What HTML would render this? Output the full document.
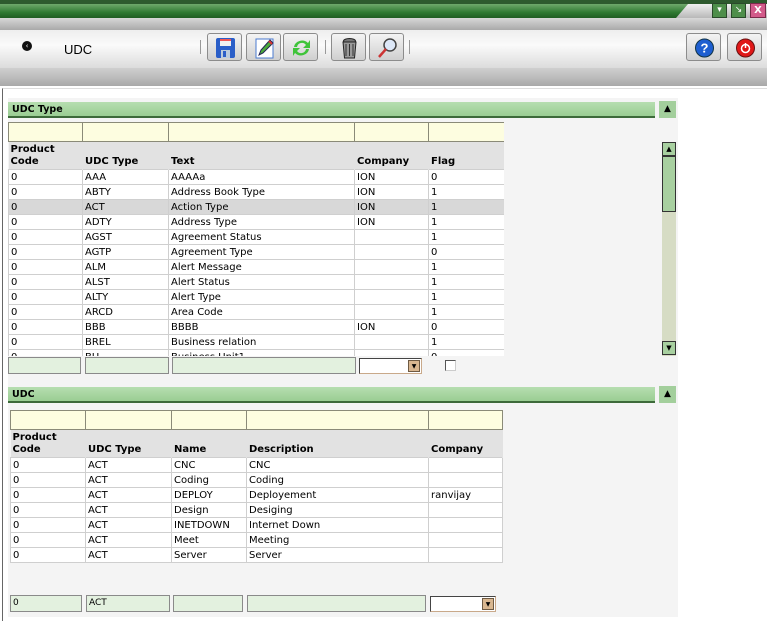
<!DOCTYPE html>
<html><head><meta charset="utf-8"><style>
*{margin:0;padding:0;box-sizing:border-box}
body{width:767px;height:621px;overflow:hidden;background:#fff;font-family:"DejaVu Sans","Liberation Sans",sans-serif;font-size:10px;color:#000;position:relative}
.a{position:absolute}
table{border-collapse:collapse;table-layout:fixed;position:absolute}
td{border:1px solid #cfcfcf;height:15px;padding:0 2px;white-space:nowrap;overflow:hidden;line-height:13px;background:#fff}
tr.f td{background:#fdfde0;border:1px solid #8a8a78;height:19px}
tr.h td{background:#e2e2e2;border:none;border-right:1px solid #e2e2e2;font-weight:bold;vertical-align:bottom;height:28px;line-height:12px;padding-bottom:1px}
tr.s td{background:#d8d8d8}
.hdr{background:linear-gradient(#b6deb0,#9acd93);border-bottom:2px solid #3d6a3a;font-weight:bold;font-size:9.5px;padding-left:4px;line-height:15px}
.cb{background:#a3cf9c;width:17px;height:17px;font-size:9px;text-align:center;line-height:17px}
.btn{top:33px;width:35px;height:28px;border:1px solid #8c8c8c;border-radius:3px;background:linear-gradient(#f4f4f4,#cfcfcf)}
.in{height:17px;border:1px solid #8a8a8a;background:#e3f1df;padding-left:2px;line-height:15px;font-size:9px}
.sel{height:16px;border:1px solid #444;border-bottom-color:#c9a98a;border-right-color:#c9a98a;background:#fff}
.sel i{position:absolute;right:1px;top:1px;width:12px;height:12px;background:#d9b790;border:1px solid #6e5a43;font-style:normal;font-size:6px;text-align:center;line-height:11px}
</style></head><body>
<div class="a" style="left:0;top:0;width:767px;height:4px;background:#2e5a2e"></div>
<div class="a" style="left:0;top:4px;width:767px;height:14px;background:linear-gradient(#6fa86b,#2f7a32 60%,#1f5e22)"></div>
<div class="a" style="left:676px;top:4px;width:91px;height:14px;background:linear-gradient(#f0f0f0,#b8b8b8);clip-path:polygon(12px 0,100% 0,100% 100%,0 100%)"></div>
<div class="a" style="left:712px;top:3px;width:15px;height:15px;background:#4e8e4a;border:1px solid #2a4a2a;color:#fff;font-size:9px;text-align:center;line-height:13px">▾</div>
<div class="a" style="left:731px;top:3px;width:15px;height:15px;background:#4e8e4a;border:1px solid #2a4a2a;color:#fff;font-size:9px;text-align:center;line-height:13px">↘</div>
<div class="a" style="left:750px;top:3px;width:16px;height:15px;background:#d25a8a;border:1px solid #7a2a4a;color:#fff;font-size:10px;text-align:center;line-height:13px;font-weight:bold">X</div>
<div class="a" style="left:0;top:18px;width:767px;height:12px;background:linear-gradient(#d8d8d8,#a9a9a9)"></div>
<div class="a" style="left:0;top:30px;width:767px;height:38px;background:linear-gradient(#eeeeee,#fafafa 40%,#dcdcdc)"></div>
<div class="a" style="left:22px;top:41px;width:10px;height:10px;border-radius:5px;background:#111;color:#fff;font-size:7px;text-align:center;line-height:10px">‹</div>
<div class="a" style="left:64px;top:42px;font-family:'Liberation Sans',sans-serif;font-size:13px">UDC</div>
<div class="a" style="left:200px;top:40px;width:1px;height:14px;background:#999"></div>
<div class="a" style="left:325px;top:40px;width:1px;height:14px;background:#999"></div>
<div class="a" style="left:409px;top:40px;width:1px;height:14px;background:#999"></div>
<div class="a btn" style="left:207px"><svg width="35" height="28"><rect x="8" y="4" width="19" height="20" rx="2" fill="#2a5ec8"/><rect x="12" y="5" width="11" height="7" fill="#f0f0f0"/><rect x="12" y="5" width="11" height="2" fill="#e55"/><rect x="13" y="16" width="9" height="8" fill="#bcd"/><rect x="15" y="17" width="3" height="6" fill="#2a5ec8"/></svg></div>
<div class="a btn" style="left:246px"><svg width="35" height="28"><rect x="9" y="5" width="17" height="19" fill="#fff" stroke="#4b7bd0"/><path d="M12 21l2-5 9-10 3 3-10 10z" fill="#4caa3c" stroke="#225"/><path d="M22 7l3 3" stroke="#d33" stroke-width="2"/></svg></div>
<div class="a btn" style="left:283px"><svg width="35" height="28"><path d="M10 13a8 7 0 0 1 14-4l2-3v8h-7l3-3a5 5 0 0 0-9 2z" fill="#3fc43a"/><path d="M25 15a8 7 0 0 1-14 4l-2 3v-8h7l-3 3a5 5 0 0 0 9-2z" fill="#3fc43a"/></svg></div>
<div class="a btn" style="left:331px"><svg width="35" height="28"><ellipse cx="17.5" cy="7" rx="6" ry="2.5" fill="#777" stroke="#222"/><path d="M11 8h13l-1.5 16h-10z" fill="#999" stroke="#222"/><path d="M14 10v12M17.5 10v12M21 10v12" stroke="#333"/></svg></div>
<div class="a btn" style="left:369px"><svg width="35" height="28"><circle cx="20" cy="11" r="6" fill="#dde8f8" stroke="#444" stroke-width="1.5"/><path d="M16 15l-7 8" stroke="#c33" stroke-width="2.5"/></svg></div>
<div class="a btn" style="left:686px"><svg width="35" height="28"><circle cx="17.5" cy="14" r="9" fill="#1e5ed0" stroke="#134"/><text x="17.5" y="18.5" text-anchor="middle" fill="#fff" font-size="13" font-weight="bold" font-family="Liberation Sans">?</text></svg></div>
<div class="a btn" style="left:727px"><svg width="35" height="28"><circle cx="17.5" cy="14" r="9" fill="#e01818" stroke="#611"/><circle cx="17.5" cy="14.5" r="4" fill="none" stroke="#fff" stroke-width="1.5"/><path d="M17.5 9v5" stroke="#fff" stroke-width="1.5"/></svg></div>
<div class="a" style="left:0;top:68px;width:767px;height:18px;background:linear-gradient(#cfcfcf,#bdbdbd 50%,#a8a8a8)"></div>
<div class="a" style="left:2px;top:88px;width:765px;height:533px;border-left:1px solid #666;border-top:1px solid #ddd"></div>
<div class="a" style="left:8px;top:98px;width:670px;height:519px;background:#f4f4f4"></div>

<div class="a hdr" style="left:8px;top:102px;width:647px;height:16px">UDC Type</div>
<div class="a cb" style="left:659px;top:101px">▲</div>
<div class="a" style="left:0;top:0;width:504px;height:356px;overflow:hidden">
<table style="left:8px;top:122px;width:496px">
<colgroup><col style="width:74px"><col style="width:86px"><col style="width:186px"><col style="width:74px"><col style="width:76px"></colgroup>
<tr class="f"><td></td><td></td><td></td><td></td><td></td></tr>
<tr class="h"><td>Product<br>Code</td><td>UDC Type</td><td>Text</td><td>Company</td><td>Flag</td></tr>
<tr><td>0</td><td>AAA</td><td>AAAAa</td><td>ION</td><td>0</td></tr>
<tr><td>0</td><td>ABTY</td><td>Address Book Type</td><td>ION</td><td>1</td></tr>
<tr class="s"><td>0</td><td>ACT</td><td>Action Type</td><td>ION</td><td>1</td></tr>
<tr><td>0</td><td>ADTY</td><td>Address Type</td><td>ION</td><td>1</td></tr>
<tr><td>0</td><td>AGST</td><td>Agreement Status</td><td></td><td>1</td></tr>
<tr><td>0</td><td>AGTP</td><td>Agreement Type</td><td></td><td>0</td></tr>
<tr><td>0</td><td>ALM</td><td>Alert Message</td><td></td><td>1</td></tr>
<tr><td>0</td><td>ALST</td><td>Alert Status</td><td></td><td>1</td></tr>
<tr><td>0</td><td>ALTY</td><td>Alert Type</td><td></td><td>1</td></tr>
<tr><td>0</td><td>ARCD</td><td>Area Code</td><td></td><td>1</td></tr>
<tr><td>0</td><td>BBB</td><td>BBBB</td><td>ION</td><td>0</td></tr>
<tr><td>0</td><td>BREL</td><td>Business relation</td><td></td><td>1</td></tr>
<tr><td>0</td><td>BU</td><td>Business Unit1</td><td></td><td>0</td></tr>
</table></div>
<div class="a" style="left:662px;top:142px;width:14px;height:214px;background:#d6dcc4"></div>
<div class="a" style="left:662px;top:142px;width:14px;height:14px;border:1px solid #333;background:#a8d0a0;font-size:7px;text-align:center;line-height:12px">▲</div>
<div class="a" style="left:662px;top:156px;width:14px;height:56px;border:1px solid #333;background:#a8d0a0"></div>
<div class="a" style="left:662px;top:341px;width:14px;height:14px;border:1px solid #333;background:#a8d0a0;font-size:7px;text-align:center;line-height:12px">▼</div>
<div class="a in" style="left:8px;top:357px;width:73px"></div>
<div class="a in" style="left:85px;top:357px;width:84px"></div>
<div class="a in" style="left:172px;top:357px;width:184px"></div>
<div class="a sel" style="left:359px;top:358px;width:63px"><i>▼</i></div>
<div class="a" style="left:445px;top:360px;width:11px;height:11px;border:1px solid #555;border-right-color:#ccc;border-bottom-color:#ccc;background:#fff"></div>

<div class="a hdr" style="left:8px;top:387px;width:647px;height:16px">UDC</div>
<div class="a cb" style="left:659px;top:386px">▲</div>
<table style="left:10px;top:410px;width:492px">
<colgroup><col style="width:75px"><col style="width:86px"><col style="width:75px"><col style="width:182px"><col style="width:74px"></colgroup>
<tr class="f"><td></td><td></td><td></td><td></td><td></td></tr>
<tr class="h"><td>Product<br>Code</td><td>UDC Type</td><td>Name</td><td>Description</td><td>Company</td></tr>
<tr><td>0</td><td>ACT</td><td>CNC</td><td>CNC</td><td></td></tr>
<tr><td>0</td><td>ACT</td><td>Coding</td><td>Coding</td><td></td></tr>
<tr><td>0</td><td>ACT</td><td>DEPLOY</td><td>Deployement</td><td>ranvijay</td></tr>
<tr><td>0</td><td>ACT</td><td>Design</td><td>Desiging</td><td></td></tr>
<tr><td>0</td><td>ACT</td><td>INETDOWN</td><td>Internet Down</td><td></td></tr>
<tr><td>0</td><td>ACT</td><td>Meet</td><td>Meeting</td><td></td></tr>
<tr><td>0</td><td>ACT</td><td>Server</td><td>Server</td><td></td></tr>
</table>
<div class="a in" style="left:10px;top:595px;width:72px">0</div>
<div class="a in" style="left:86px;top:595px;width:84px">ACT</div>
<div class="a in" style="left:173px;top:595px;width:70px"></div>
<div class="a in" style="left:247px;top:595px;width:179px"></div>
<div class="a sel" style="left:430px;top:596px;width:66px"><i>▼</i></div>
</body></html>
